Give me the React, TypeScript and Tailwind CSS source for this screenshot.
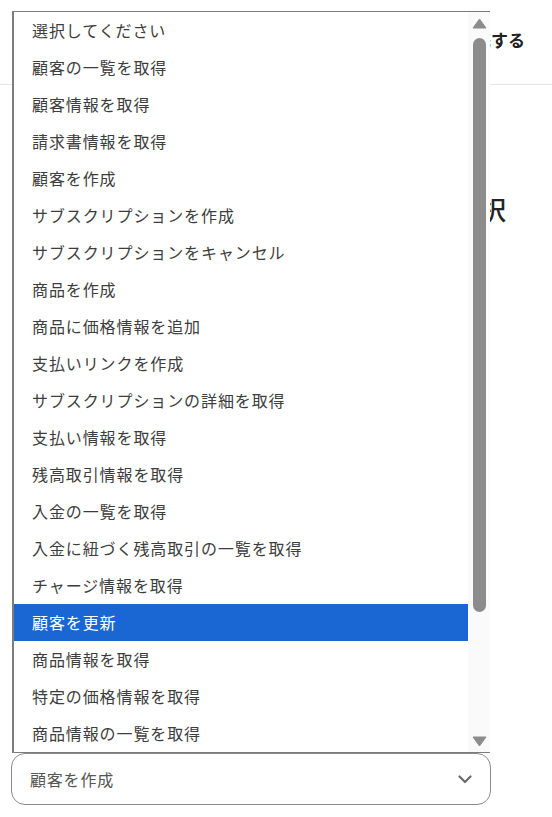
import React from "react";

const items = [
  "選択してください",
  "顧客の一覧を取得",
  "顧客情報を取得",
  "請求書情報を取得",
  "顧客を作成",
  "サブスクリプションを作成",
  "サブスクリプションをキャンセル",
  "商品を作成",
  "商品に価格情報を追加",
  "支払いリンクを作成",
  "サブスクリプションの詳細を取得",
  "支払い情報を取得",
  "残高取引情報を取得",
  "入金の一覧を取得",
  "入金に紐づく残高取引の一覧を取得",
  "チャージ情報を取得",
  "顧客を更新",
  "商品情報を取得",
  "特定の価格情報を取得",
  "商品情報の一覧を取得",
];

const FONT = '"Noto Sans CJK JP", "Noto Sans", sans-serif';

export default function App() {
  return (
    <div
      className="relative w-[552px] h-[817px] bg-white overflow-hidden"
      style={{ fontFamily: FONT }}
    >
      <header className="h-[85px] border-b border-[#e6e6e6] flex items-start justify-end pr-[27px] pt-[28px]">
        <span className="text-[17px] font-semibold text-[#222] leading-[24px]">
          アプリと連携する
        </span>
      </header>

      <div className="flex justify-end pr-[46px] mt-[106px]">
        <h1 className="text-[26px] font-medium text-[#222] leading-[36px]">
          アクションを選択
        </h1>
      </div>

      <div className="ml-[12px] w-[478px] h-[57px] mt-[113px] border border-[#cfd3da] rounded-[12px]" />
      <div className="ml-[12px] w-[478px] h-[95px] mt-[66px] border border-[#cfd3da] rounded-[12px]" />
      <div className="ml-[12px] w-[478px] h-[58px] mt-[67px] border border-[#cfd3da] rounded-[12px]" />

      <div className="ml-[11px] w-[480px] h-[52px] mt-[70px] border border-[#8a8a8a] rounded-[14px] flex items-center justify-between pl-[18px] pr-[18px]">
        <span className="text-[16px] tracking-[0.8px] text-[#555]">顧客を作成</span>
        <svg width="14" height="9" viewBox="0 0 14 9" fill="none">
          <path d="M1.5 1.5 L7 7 L12.5 1.5" stroke="#6b6b6b" strokeWidth="2.2" strokeLinecap="round" strokeLinejoin="round" />
        </svg>
      </div>

      {/* open listbox overlay */}
      <div className="absolute top-[11px] left-[12px] w-[478px] h-[742px] bg-white border-t border-b border-l-2 border-[#7d7d7d] flex">
        <ul className="flex-1 flex flex-col">
          {items.map((t, i) => (
            <li
              key={i}
              className={
                "h-[37px] leading-[37px] pl-[18px] text-[16px] tracking-[0.9px] whitespace-nowrap " +
                (t === "顧客を更新" ? "bg-[#1a67d3] text-white" : "text-[#3d3d3d]")
              }
            >
              {t}
            </li>
          ))}
        </ul>
        <div className="w-[22px] bg-[#fafafa] flex flex-col items-center">
          <div className="h-[22px] flex items-center justify-center">
            <svg width="15" height="11" viewBox="0 0 15 11">
              <path d="M7.5 1 L14 10 L1 10 Z" fill="#8c8c8c" stroke="#8c8c8c" strokeWidth="1" strokeLinejoin="round" />
            </svg>
          </div>
          <div className="mt-[4px] w-[13px] h-[574px] rounded-full bg-[#8c8c8c]" />
          <div className="flex-1" />
          <div className="h-[22px] flex items-center justify-center">
            <svg width="15" height="11" viewBox="0 0 15 11">
              <path d="M1 1 L14 1 L7.5 10 Z" fill="#8c8c8c" stroke="#8c8c8c" strokeWidth="1" strokeLinejoin="round" />
            </svg>
          </div>
        </div>
      </div>
    </div>
  );
}
